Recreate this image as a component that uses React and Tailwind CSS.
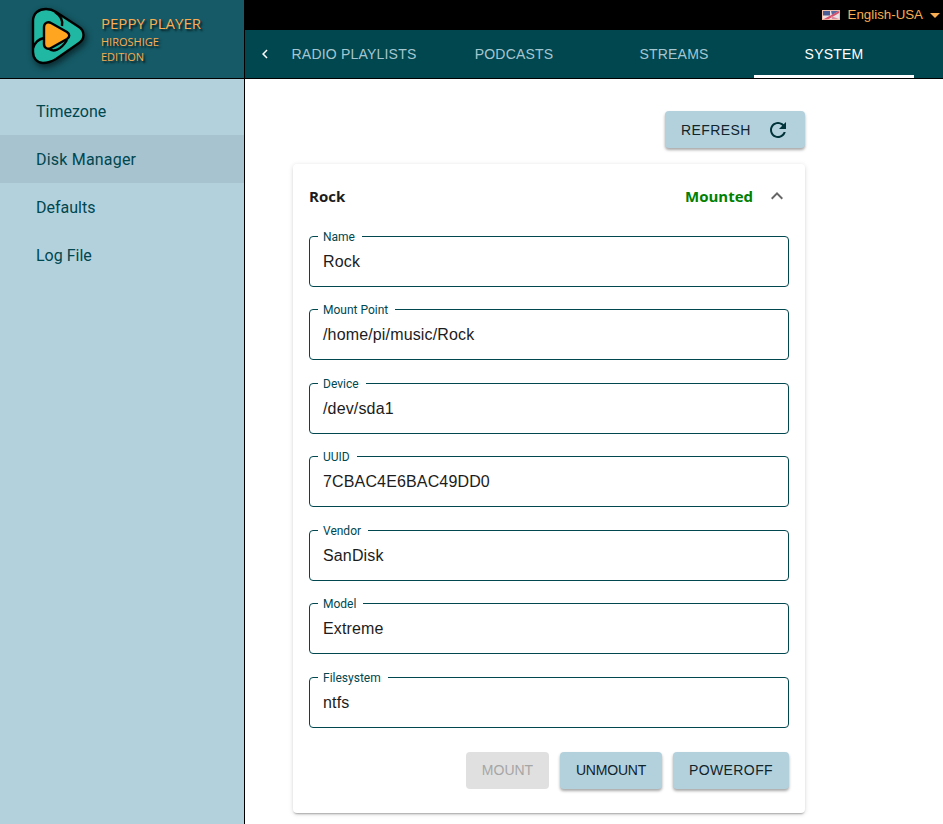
const TABS = ["RADIO PLAYLISTS", "PODCASTS", "STREAMS", "SYSTEM"];
const MENU = ["Timezone", "Disk Manager", "Defaults", "Log File"];
const FIELDS = [
  { label: "Name", value: "Rock" },
  { label: "Mount Point", value: "/home/pi/music/Rock" },
  { label: "Device", value: "/dev/sda1" },
  { label: "UUID", value: "7CBAC4E6BAC49DD0" },
  { label: "Vendor", value: "SanDisk" },
  { label: "Model", value: "Extreme" },
  { label: "Filesystem", value: "ntfs" }
];

const Logo = () => (
  <svg viewBox="0 0 60 62" className="mb-[3px] h-[62px] w-[60px] drop-shadow-[2px_3px_3px_rgba(0,0,0,0.55)]">
    <path
      d="M4 15C4 7 10 3 17 3C21 3 24 4 27 6L50 21C56 25 56 33 50 37L27 53C22 56 18 57 14 57C8 57 4 52 4 46Z"
      fill="#20b8a3"
      stroke="#000"
      strokeWidth="2.4"
      strokeLinejoin="round"
    />
    <path d="M26 6C32 10 34 15 33 20" fill="none" stroke="#000" strokeWidth="2.4" />
    <path d="M4 42C6 36 10 33 15 32" fill="none" stroke="#000" strokeWidth="2.4" />
    <path d="M19 42C24 47 32 44 38 34" fill="none" stroke="#000" strokeWidth="2.4" />
    <path
      d="M15 21C15 17 19 15 22 17L38 26C41 28 41 31 38 33L22 42C19 44 15 42 15 38Z"
      fill="#ffa51f"
      stroke="#000"
      strokeWidth="2.4"
      strokeLinejoin="round"
    />
  </svg>
);

const Flag = () => (
  <svg viewBox="0 0 18 10" className="h-[10px] w-[18px]">
    <rect width="18" height="10" fill="#eadfe2" />
    <path d="M1 1H8V5.5H1Z" fill="#4a5a92" />
    <path d="M9 1H17L10 5Z" fill="#5a6aa0" />
    <path d="M0 10L18 0.5V2.5L5 10Z" fill="#d9506a" />
    <path d="M9 6L17 9H10Z" fill="#d98a9c" />
    <path d="M0 0H18V0.8H0ZM0 9.2H18V10H0ZM0 0H0.8V10H0ZM17.2 0H18V10H17.2Z" fill="#f2b9a0" />
  </svg>
);

const Field = ({ label, value }) => (
  <fieldset className="h-[58px] rounded border border-[#00474f] pl-[13px] pr-3">
    <legend className="ml-[-5px] px-[5px] pt-[2px] text-xs leading-[13px] text-[#00474f]">
      {label}
      <span className="inline-block w-[2px]" />
    </legend>
    <div className="pt-[6px] font-['Liberation_Sans',sans-serif] text-base leading-6 tracking-[0.15px] text-[#1c1c1c]">
      {value}
    </div>
  </fieldset>
);

const ActionButton = ({ children, className }) => (
  <button
    type="button"
    className={`h-[37px] rounded font-['Liberation_Sans',sans-serif] text-sm leading-none ${className}`}
  >
    {children}
  </button>
);

export default function App() {
  return (
    <div className="flex h-[824px] w-[943px] overflow-hidden bg-white font-['Roboto',sans-serif]">
      <aside className="flex w-[245px] shrink-0 flex-col border-r border-black bg-[#b3d1dd]">
        <div className="flex h-[79px] shrink-0 items-center border-b border-black bg-[#155a66] pl-[29px] pb-[1px]">
          <Logo />
          <div className="ml-[12px] font-['Open_Sans',sans-serif] text-[#f9ae53] [text-shadow:2px_2px_2px_rgba(0,0,0,0.7)]">
            <div className="pt-[1px] text-[15px] leading-[19px]">PEPPY PLAYER</div>
            <div className="mt-[1px] text-[11px] leading-[15px]">HIROSHIGE</div>
            <div className="text-[11px] leading-[15px]">EDITION</div>
          </div>
        </div>
        <nav className="pt-2">
          {MENU.map((item) => (
            <div
              key={item}
              className={
                item === "Disk Manager"
                  ? "h-12 bg-[#a6c3cf] pl-9 pt-[1px] text-base leading-[48px] tracking-[0.2px] text-[#00474f]"
                  : "h-12 pl-9 pt-[1px] text-base leading-[48px] text-[#00474f]"
              }
            >
              {item}
            </div>
          ))}
        </nav>
      </aside>

      <main className="flex min-w-0 flex-1 flex-col">
        <div className="flex h-[30px] shrink-0 items-center justify-end bg-black pr-[3px] font-['Liberation_Sans',sans-serif] text-[13.3px] text-[#f9ae53]">
          <Flag />
          <span className="ml-2">English-USA</span>
          <span className="ml-[7px] mt-[1px] h-0 w-0 border-x-[5px] border-t-[5px] border-x-transparent border-t-[#f9ae53]" />
        </div>
        <div className="flex h-[49px] shrink-0 border-b border-black bg-[#00474f] font-['Liberation_Sans',sans-serif]">
          <div className="mr-[-11px] flex w-[40px] items-center justify-center">
            <svg viewBox="0 0 24 24" className="h-[18px] w-[18px] fill-white">
              <path d="M15.41 16.59L10.83 12l4.58-4.59L14 6l-6 6 6 6 1.41-1.41z" />
            </svg>
          </div>
          {TABS.map((tab) => (
            <div
              key={tab}
              className={
                tab === "SYSTEM"
                  ? "flex w-[160px] items-center justify-center border-b-[3px] border-white pt-[3px] text-sm tracking-[0.2px] text-white"
                  : "flex w-[160px] items-center justify-center border-b-[3px] border-transparent pt-[3px] text-sm tracking-[0.2px] text-[#a5c6cf]"
              }
            >
              {tab}
            </div>
          ))}
        </div>

        <div className="flex flex-col pl-12 pr-[138px] pt-8">
          <div className="flex justify-end">
            <button
              type="button"
              className="flex h-[37px] w-[140px] items-center rounded bg-[#b3d1dd] pl-4 font-['Liberation_Sans',sans-serif] text-sm tracking-[0.4px] text-[#10242b] shadow-[0_2px_3px_rgba(0,0,0,0.35)]"
            >
              REFRESH
              <svg viewBox="0 0 24 24" className="ml-[15px] h-6 w-6 fill-[#00343a]">
                <path d="M17.65 6.35C16.2 4.9 14.21 4 12 4c-4.42 0-7.99 3.58-7.99 8s3.57 8 7.99 8c3.73 0 6.84-2.55 7.73-6h-2.08c-.82 2.33-3.04 4-5.65 4-3.31 0-6-2.69-6-6s2.69-6 6-6c1.66 0 3.14.69 4.22 1.78L13 11h7V4l-2.35 2.35z" />
              </svg>
            </button>
          </div>

          <section className="mt-4 h-[649px] rounded bg-white px-4 shadow-[0_2px_2px_-1px_rgba(0,0,0,0.3),0_1px_5px_rgba(0,0,0,0.14)]">
            <div className="flex h-[64.9px] items-center font-['Open_Sans',sans-serif] text-[15px] font-bold">
              <span className="flex-1 text-[#1c1c1c]">Rock</span>
              <span className="text-[#008000]">Mounted</span>
              <svg viewBox="0 0 24 24" className="ml-3 h-6 w-6 fill-[#666]">
                <path d="M12 8l-6 6 1.41 1.41L12 10.83l4.59 4.58L18 14z" />
              </svg>
            </div>
            <div className="flex flex-col gap-[15.5px]">
              {FIELDS.map((field) => (
                <Field key={field.label} label={field.label} value={field.value} />
              ))}
            </div>
            <div className="mt-[24.1px] flex justify-end gap-[11px]">
              <ActionButton className="w-[83px] bg-[#e0e0e0] text-[#a6a6a6]">MOUNT</ActionButton>
              <ActionButton className="w-[102px] bg-[#b3d1dd] tracking-[-0.2px] text-[#10242b] shadow-[0_2px_3px_rgba(0,0,0,0.35)]">
                UNMOUNT
              </ActionButton>
              <ActionButton className="w-[116px] bg-[#b3d1dd] tracking-[0.4px] text-[#10242b] shadow-[0_2px_3px_rgba(0,0,0,0.35)]">
                POWEROFF
              </ActionButton>
            </div>
          </section>
        </div>
      </main>
    </div>
  );
}
